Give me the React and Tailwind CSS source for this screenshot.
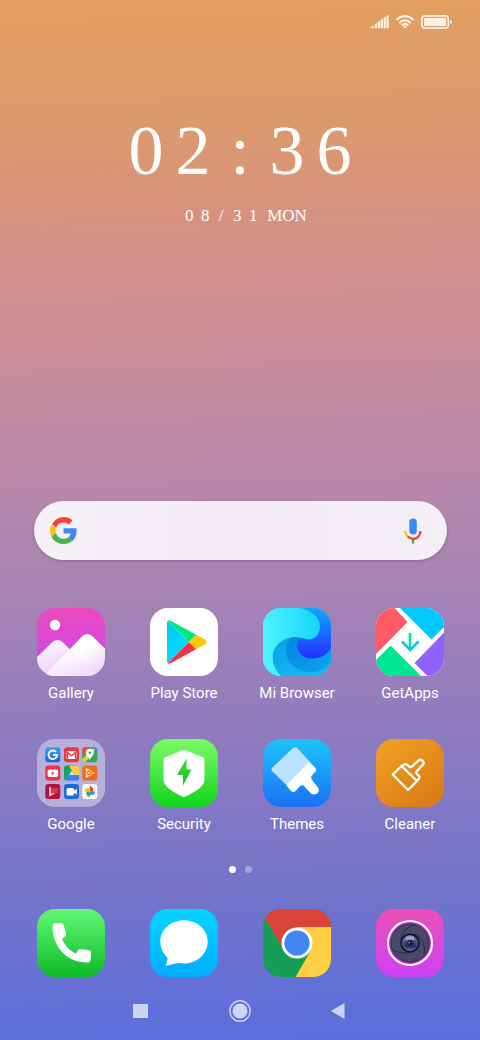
import React from "react";

const art = "block size-[68px] rounded-[18px] overflow-hidden";

function Art({ children }) {
  return (
    <svg viewBox="0 0 68 68" className={art} aria-hidden="true">
      {children}
    </svg>
  );
}

function Grad({ id, from, to, x2 = 0, y2 = 1 }) {
  return (
    <linearGradient id={id} x1="0" y1="0" x2={x2} y2={y2}>
      <stop offset="0" stopColor={from} />
      <stop offset="1" stopColor={to} />
    </linearGradient>
  );
}

function GalleryIcon() {
  return (
    <Art>
      <defs>
        <Grad id="gal" from="#ec4abc" to="#c346fa" />
        <Grad id="galA" from="#ffffff" to="#ecc8f6" x2="0.5" />
        <Grad id="galB" from="#ffffff" to="#f3dcfa" x2="0.6" />
        <linearGradient id="galC" x1="0" y1="0.2" x2="0.7" y2="1">
          <stop offset="0" stopColor="#fff" />
          <stop offset="0.55" stopColor="#fff" />
          <stop offset="1" stopColor="#f0d6f8" />
        </linearGradient>
      </defs>
      <rect width="68" height="68" fill="url(#gal)" />
      <circle cx="18" cy="17" r="5.2" fill="#fff" />
      <path d="M0 49 L15.500 34 Q20.500 30 25.500 34 L50 58 V68 H0Z" fill="url(#galA)" />
      <path d="M8 67 L45 28.500 Q50 24 55 28 L68 40.500 V68 H8Z" fill="url(#galC)" />
      <path d="M33 41 L8 67 V68 H62Z" fill="url(#galB)" opacity=".65" />
    </Art>
  );
}

function PlayIcon() {
  return (
    <Art>
      <defs>
        <Grad id="plB" from="#00c3f2" to="#00e1ff" x2="0.6" />
        <clipPath id="plC">
          <path d="M17 14.500 Q17 11.500 20.500 12.700 L55 31.500 Q58.500 34 55 36.300 L20.500 55.300 Q17 56.500 17 53.500Z" />
        </clipPath>
      </defs>
      <rect width="68" height="68" fill="#fff" />
      <g clipPath="url(#plC)">
        <path d="M10 5 L39 34 L10 63Z" fill="url(#plB)" />
        <path d="M10 5 L39 34 L48 25Z" fill="#00e87b" />
        <path d="M10 63 L39 34 L48 43Z" fill="#f5314a" />
        <path d="M39 34 L48 25 L68 34 L48 43Z" fill="#ffc800" />
      </g>
    </Art>
  );
}

function BrowserIcon() {
  return (
    <Art>
      <defs>
        <linearGradient id="mbA" gradientUnits="userSpaceOnUse" x1="0" y1="20" x2="60" y2="14">
          <stop offset="0" stopColor="#4ef3fe" />
          <stop offset="1" stopColor="#12d5fa" />
        </linearGradient>
        <Grad id="mbB" from="#0fa8ff" to="#2330fc" />
        <Grad id="mbC" from="#0a9fe6" to="#10baf8" x2="0.7" />
        <Grad id="mbD" from="#0781dc" to="#09a6f0" x2="0.9" />
      </defs>
      <rect width="68" height="68" fill="url(#mbA)" />
      <path d="M30 28 C14 29 8 40 9.500 50 C10 58 13 63 18 68 H68 V30Z" fill="url(#mbC)" />
      <path d="M31 28 C25 32 23 38 23 44 C24 57 36 64 48 64 C58 64 65 60 68 54 V30Z" fill="url(#mbD)" />
      <path d="M35 0 H68 V40 C64 47 57 50.500 49 50.500 C40 50.500 34 44 34 38 C34 34.500 36 31.500 39 29Z" fill="url(#mbB)" />
      <path d="M0 0 H37 C50 3 57 10 57 18 C57 27 51 32 45 31.500 C39 31 36 28.500 29 29.200 C16 31 9 41 9.500 50 C10 58 13 63 18 68 H0Z" fill="url(#mbA)" />
    </Art>
  );
}

function GetAppsIcon() {
  return (
    <Art>
      <rect width="68" height="68" fill="#fff" />
      <path d="M0 0 H18.500 L31.500 14 L0 46Z" fill="#ff5a67" />
      <path d="M24 0 H68 V19 L55.500 31.500Z" fill="#00c9ff" />
      <path d="M68 24.500 V68 H51.500 L38.500 55Z" fill="#8f62ff" />
      <path d="M0 52 L14.500 37.500 L45 68 H0Z" fill="#02e694" />
      <path d="M34 25 V42" stroke="#06df94" strokeWidth="2.600" />
      <path d="M26 33.500 L34.200 42 L42.500 33.500" fill="none" stroke="#16bdea" strokeWidth="2.600" />
    </Art>
  );
}

function Tile({ x, y, fill, children }) {
  return (
    <g transform={`translate(${x} ${y})`}>
      <rect width="15" height="15" rx="3" fill={fill} />
      {children}
    </g>
  );
}

function GoogleFolderIcon() {
  return (
    <Art>
      <defs>
        <Grad id="fgB" from="#2fa2f6" to="#1565dc" />
        <clipPath id="fgT">
          <rect width="15" height="15" rx="3" />
        </clipPath>
      </defs>
      <rect width="68" height="68" fill="#b7b0da" />
      <Tile x="8.300" y="8.200" fill="url(#fgB)">
        <path d="M10.800 4.800 A4.300 4.300 0 1 0 11.800 7.700 H7.700" fill="none" stroke="#fff" strokeWidth="1.900" />
      </Tile>
      <Tile x="27" y="8.200" fill="#ed3446">
        <rect x="2.500" y="3.800" width="10" height="8" rx=".8" fill="#fff" />
        <path d="M3.500 11.600 V5 L7.500 8.600 L11.500 5 V11.600" fill="none" stroke="#e63a47" strokeWidth="1.400" />
      </Tile>
      <Tile x="45.300" y="8.200" fill="#38ab58">
        <g clipPath="url(#fgT)">
          <path d="M0 0 H8 L0 9Z" fill="#e94b3d" />
          <path d="M0 12 L12 0 H15 L3 15 H0Z" fill="#f7cb38" />
          <path d="M10 0 H15 V5Z" fill="#3f86ed" />
          <path d="M7 12 L15 5 V15 H9Z" fill="#35a65a" />
        </g>
        <path d="M7.500 13 C7 10 3.500 8.500 3.500 5.500 A4 4 0 0 1 11.500 5.500 C11.500 8.500 8 10 7.500 13Z" fill="#fff" />
        <circle cx="7.500" cy="5.500" r="1.300" fill="#59965e" />
      </Tile>
      <Tile x="8.300" y="26.500" fill="#f0334b">
        <rect x="2.300" y="4" width="10.500" height="7.600" rx="2" fill="#fff" />
        <path d="M6.400 6 L9.200 7.700 L6.400 9.400Z" fill="#e82f42" />
      </Tile>
      <Tile x="27" y="26.500" fill="#3b82ec">
        <g clipPath="url(#fgT)">
          <path d="M0 0 H5.500 V6 L1.500 14 L0 15Z" fill="#19a261" />
          <path d="M5 0 L9 6 L4.500 12 L0 15 V8Z" fill="#1da364" />
          <path d="M5 0 H15 V9.500 H10.500Z" fill="#ffd04b" />
          <path d="M0 15 L4.500 9.500 H15 V15Z" fill="#3b82ec" />
          <path d="M7.700 5 L10.500 9.500 H5Z" fill="#c9e6ff" />
        </g>
      </Tile>
      <Tile x="45.300" y="26.500" fill="#f36b18">
        <path d="M3.500 2.500 L12.500 7.500 L3.500 12.500Z" fill="#fff0df" />
        <circle cx="7" cy="7.500" r="2.800" fill="#f36b18" stroke="#ffca4d" />
        <circle cx="7" cy="7.500" r="1" fill="#fff" />
      </Tile>
      <Tile x="8.300" y="45" fill="#ad1643">
        <path d="M4 2.500 L5.500 3.500 V10 L12.500 7.500 L4 12.500Z" fill="#ffe3e9" />
        <path d="M5.700 4 H12.500 V9 H5.700Z" fill="#e92d49" />
      </Tile>
      <Tile x="27" y="45" fill="#176be2">
        <rect x="2.500" y="4" width="7.500" height="7.500" rx="1.500" fill="#fff" />
        <path d="M9.500 7 L12.800 4.700 V10.800 L9.500 8.500Z" fill="#fff" />
      </Tile>
      <Tile x="45.300" y="45" fill="#fff">
        <path d="M7.500 7.500 V2 Q11.500 2.500 11 7.500Z" fill="#e94336" />
        <path d="M7.500 7.500 H13 Q12.500 11.500 7.500 11Z" fill="#4285f4" />
        <path d="M7.500 7.500 V13 Q3.500 12.500 4 7.500Z" fill="#34a853" />
        <path d="M7.500 7.500 H2 Q2.500 3.500 7.500 4Z" fill="#fbbc04" />
      </Tile>
    </Art>
  );
}

function SecurityIcon() {
  return (
    <Art>
      <defs>
        <Grad id="sec" from="#7dfa68" to="#12d51f" />
        <Grad id="secB" from="#3ddc35" to="#0cc51a" />
      </defs>
      <rect width="68" height="68" fill="url(#sec)" />
      <path d="M32.500 11.300 Q34 10.500 35.500 11.300 L52.500 18 Q54.500 19 54.500 21 V40 C54.500 49 42 54 35.500 57.600 Q34 58.400 32.500 57.600 C26 54 13.500 49 13.500 40 V21 Q13.500 19 15.500 18Z" fill="#fff" />
      <path d="M36.500 19.500 L27 36 H33 V46.500 L41.500 30.500 H36.500Z" fill="url(#secB)" />
    </Art>
  );
}

function ThemesIcon() {
  return (
    <Art>
      <defs>
        <Grad id="thm" from="#1dc5fb" to="#1b70f5" />
      </defs>
      <rect width="68" height="68" fill="url(#thm)" />
      <path d="M46 22.500 L52 28.500 Q54 31 52 33 L48.500 37 Q47.500 39 49 41 L55 48.500 C58 53 52 58 47.500 54 L41 47 Q39 45.500 37 47 L32.500 52 Q30.500 54 28 52 L23 46Z" fill="#fff" />
      <path d="M29.500 9.500 Q32 7 34.500 9.500 L46.700 22.500 L23.500 46 L9.500 32.500 Q7.500 30.500 9.500 28.500Z" fill="#bbe3fd" />
    </Art>
  );
}

function CleanerIcon() {
  return (
    <Art>
      <defs>
        <Grad id="cln" from="#f1a321" to="#d97a18" x2="0.8" />
      </defs>
      <rect width="68" height="68" fill="url(#cln)" />
      <path d="M26 26.500 L16.700 35.500 L32 51 L41.500 41.500 L43 39.500 Q44 38 42.500 36.500 L41 35 Q39.500 33.500 41 32 L47 25.500 Q48.500 23.500 46.500 21.700 Q44.500 20 42.500 21.500 L36 27.500 Q34.500 29 33 27.500 L31.500 26 Q29.500 24.500 28 25.500Z M25.500 27 L41 42" fill="none" stroke="#fff" strokeWidth="2.300" strokeLinejoin="round" />
    </Art>
  );
}

function PhoneIcon() {
  return (
    <Art>
      <defs>
        <Grad id="phn" from="#63f877" to="#0cba26" />
      </defs>
      <rect width="68" height="68" fill="url(#phn)" />
      <path d="M18 14.200 H24 Q26.300 14.200 26.800 16.500 L29 24 Q29.500 26 28 27.500 L25 30 C28 37 32.500 41.500 39 44.500 L41 41.300 Q42 39.800 44 40.200 L52 41 Q54.300 41.500 54.200 44 L53.500 51 Q53.300 53.500 51 53.500 C30 54 15.500 38 15.500 17 Q15.500 14.200 18 14.200Z" fill="#fff" />
    </Art>
  );
}

function MessagesIcon() {
  return (
    <Art>
      <defs>
        <Grad id="msg" from="#05d5ff" to="#02acff" />
      </defs>
      <rect width="68" height="68" fill="url(#msg)" />
      <path d="M34 11.300 C20.500 11.300 10.300 20.800 10.300 32.500 C10.300 39 13 44.500 17.500 48.500 C17.500 52 16.500 54 15.800 55.800 Q15.500 57 17 56.800 C21 56 24.500 54.500 28 53.800 Q31 54.500 34 54.500 C47.500 54.500 57.700 44.500 57.700 32.500 C57.700 20.500 47 11.300 34 11.300Z" fill="#fff" />
    </Art>
  );
}

function ChromeIcon() {
  return (
    <Art>
      <rect width="68" height="68" fill="#149e58" />
      <path d="M34 18 H68 V68 H32.500 L48 41Z" fill="#ffce43" />
      <path d="M0 0 H68 V18 H34 L19.500 39 L1 7.500Z" fill="#dc4437" />
      <circle cx="34" cy="34" r="15.500" fill="#fff" />
      <circle cx="34" cy="34" r="12.600" fill="#4286f5" />
    </Art>
  );
}

function CameraIcon() {
  return (
    <Art>
      <defs>
        <Grad id="cam" from="#ec4fb6" to="#cd42f5" />
        <linearGradient id="lens" x1="0" y1="0" x2="0" y2="1">
          <stop offset="0" stopColor="#8d94b4" />
          <stop offset=".4" stopColor="#4a5480" />
          <stop offset=".7" stopColor="#29325f" />
          <stop offset="1" stopColor="#5265b0" />
        </linearGradient>
      </defs>
      <rect width="68" height="68" fill="url(#cam)" />
      <circle cx="34" cy="34" r="22" fill="#b927bb" stroke="#fff" strokeWidth="2.200" />
      <circle cx="34" cy="34" r="19" fill="#464a68" stroke="#2b2c48" strokeWidth=".8" />
      <g fill="none" stroke="#25273f" strokeWidth=".9">
        <path d="M25 30 C26 23 32 17 39 15.800" />
        <path d="M38 25 C45 27 50 35 48 45" />
        <path d="M38 42 C32 45 23 44 15.500 41" />
      </g>
      <circle cx="34" cy="34" r="9.800" fill="#14162a" />
      <circle cx="34" cy="34" r="7.500" fill="url(#lens)" stroke="#6674ab" strokeWidth=".7" />
      <ellipse cx="34" cy="29.800" rx="4.500" ry="2.200" fill="#c9cee0" opacity=".5" />
      <circle cx="34" cy="34.500" r="3.800" fill="#222b5c" />
      <circle cx="34" cy="34.500" r="1.600" fill="#0b0d25" />
      <circle cx="33.300" cy="33.800" r=".8" fill="#a9b6f2" />
    </Art>
  );
}

function AppButton({ label, Icon, hideLabel }) {
  return (
    <button type="button" aria-label={label} className="flex flex-col items-center">
      <Icon />
      {!hideLabel && (
        <span className="mt-[7px] whitespace-nowrap text-[15px] leading-5 text-white">{label}</span>
      )}
    </button>
  );
}

const apps = [
  ["Gallery", GalleryIcon],
  ["Play Store", PlayIcon],
  ["Mi Browser", BrowserIcon],
  ["GetApps", GetAppsIcon],
  ["Google", GoogleFolderIcon],
  ["Security", SecurityIcon],
  ["Themes", ThemesIcon],
  ["Cleaner", CleanerIcon],
];

const dock = [
  ["Phone", PhoneIcon],
  ["Messages", MessagesIcon],
  ["Chrome", ChromeIcon],
  ["Camera", CameraIcon],
];

function StatusBar() {
  return (
    <header className="flex h-11 items-center justify-end gap-[7px] pr-7 text-[#fff3e6]">
      <svg viewBox="0 0 19 14" className="h-[14px] w-[19px]" fill="currentColor" aria-hidden="true">
        <path d="M0 13.200 L3.700 10.200 V13.200Z M4.800 9.300 L7 7.800 V13.200 H4.800Z M7.800 7.200 L10 5.600 V13.200 H7.800Z M10.800 4.900 L13 3.400 V13.200 H10.800Z M13.700 2.900 L15.800 1.500 V13.200 H13.700Z M16.500 1 L18.600 0 V13.200 H16.500Z" />
      </svg>
      <svg viewBox="0 0 18 14" className="h-[14px] w-[18px]" fill="none" stroke="currentColor" strokeWidth="2.100" aria-hidden="true">
        <path d="M.7 4.900 Q9 -2.600 17.300 4.900" />
        <path d="M3.300 7.900 Q9 2.600 14.700 7.900" />
        <path d="M5.700 10.500 Q9 7.400 12.300 10.500" />
        <path d="M7.100 11.400 Q9 10.200 10.900 11.400 L9 13.800Z" fill="currentColor" stroke="none" />
      </svg>
      <svg viewBox="0 0 31 14" className="h-[14px] w-[31px]" aria-hidden="true">
        <rect x=".9" y=".9" width="26.400" height="12.200" rx="3" fill="none" stroke="currentColor" strokeWidth="1.600" />
        <rect x="3.100" y="3.100" width="22" height="7.800" rx="1" fill="currentColor" />
        <path d="M29 5 Q30.800 5 30.800 7 Q30.800 9 29 9Z" fill="currentColor" />
      </svg>
    </header>
  );
}

function Clock() {
  return (
    <section className="mt-[72px] flex flex-col items-center font-['Liberation_Serif',serif] text-white">
      <time className="grid grid-cols-[repeat(5,47px)] text-center text-[70px] leading-[70px]">
        <span>0</span>
        <span>2</span>
        <span>:</span>
        <span>3</span>
        <span>6</span>
      </time>
      <p className="mt-5 flex pl-2 text-center text-[17px] leading-5">
        <span className="w-4">0</span>
        <span className="w-4">8</span>
        <span className="w-4">/</span>
        <span className="w-4">3</span>
        <span className="w-4">1</span>
        <span className="ml-1.5">MON</span>
      </p>
    </section>
  );
}

function SearchBar() {
  return (
    <form className="ml-[34px] mr-[33px] flex h-[59px] items-center rounded-full bg-gradient-to-r from-[#f6f2f7] via-[#f1eaf1] to-[#f5f0f6] px-4 shadow-[0_1px_3px_rgba(70,40,90,0.35)]">
      <svg viewBox="0 0 48 48" className="size-[27px] shrink-0" aria-hidden="true">
        <path fill="#ff3d31" d="M4 13 C8 5 15.500 0 24 0 C30.500 0 36 2.400 40 6.300 L33.200 13.200 C30.700 10.800 27.600 9.400 24 9.400 C18 9.400 13 13.300 10.800 18.500Z" />
        <path fill="#ffc107" d="M2.700 13.200 L10.700 19.200 C9.400 22.400 9.400 26 10.700 29.200 L2.700 35 C-.8 28 -.8 20 2.700 13.200Z" />
        <path fill="#4caf50" d="M2.700 35 L10.700 28.800 C12.700 34.600 17.900 38.600 24 38.600 C27 38.600 30 37.800 32.200 36.300 L39.800 42.200 C35.700 46 30.100 48 24 48 C14.900 48 6.700 42.900 2.700 35Z" />
        <path fill="#4285f4" d="M24 19.800 H46.900 C48.500 29 45.700 37.200 39.800 42.500 L32.100 36.400 C34.600 34.700 36.300 32.200 36.900 29.200 H24Z" />
      </svg>
      <input type="search" aria-label="Search" className="min-w-0 flex-1 bg-transparent px-3 text-[16px] text-gray-800 outline-none" />
      <button type="button" aria-label="Voice search" className="flex w-9 shrink-0 justify-center">
        <svg viewBox="0 0 18 26" className="h-[26px] w-[18px]" aria-hidden="true">
          <rect x="5.300" y=".5" width="7.500" height="16" rx="3.700" fill="#4285f4" />
          <path d="M9 21 V25.500" stroke="#34a853" strokeWidth="2.200" />
          <path d="M1.500 13 C1.500 15.300 2.400 17.300 3.700 18.700" fill="none" stroke="#fbbc04" strokeWidth="2.200" />
          <path d="M3.700 18.500 C7 21.800 12 21.500 14.300 18.700 C15.800 17 16.500 15.300 16.500 13" fill="none" stroke="#ea4335" strokeWidth="2.200" />
        </svg>
      </button>
    </form>
  );
}

const iconGrid = "grid grid-cols-[repeat(4,68px)] justify-between gap-y-9 pl-[37px] pr-9";

export default function App() {
  return (
    <main className="flex min-h-screen flex-col bg-[linear-gradient(178deg,#e3a05f_0%,#dc986f_14%,#d38f89_25%,#c98c99_34%,#b687ad_48%,#a381b7_59%,#8c7bc1_72%,#7674c9_84%,#596edc_100%)] font-['Roboto',sans-serif]">
      <StatusBar />
      <Clock />
      <div className="flex-1" />
      <SearchBar />
      <div className={`mt-12 ${iconGrid}`}>
        {apps.map(([label, Icon]) => (
          <AppButton key={label} label={label} Icon={Icon} />
        ))}
      </div>
      <div className="mt-8 flex justify-center gap-[9px]">
        <span className="size-[7px] rounded-full bg-white" />
        <span className="size-[7px] rounded-full bg-white/35" />
      </div>
      <div className={`mt-9 ${iconGrid}`}>
        {dock.map(([label, Icon]) => (
          <AppButton key={label} label={label} Icon={Icon} hideLabel />
        ))}
      </div>
      <nav className="flex justify-center gap-[75px] pb-[17px] pt-[22px] text-[#d0d4f3]">
        <button type="button" aria-label="Recent apps">
          <svg viewBox="0 0 24 24" className="block size-6" aria-hidden="true">
            <path d="M4 5 H19 V19 H4Z" fill="currentColor" />
          </svg>
        </button>
        <button type="button" aria-label="Home">
          <svg viewBox="0 0 24 24" className="block size-6" aria-hidden="true">
            <circle cx="12" cy="12" r="10.200" fill="none" stroke="currentColor" strokeWidth="1.400" />
            <circle cx="12" cy="12" r="7.500" fill="currentColor" />
          </svg>
        </button>
        <button type="button" aria-label="Back">
          <svg viewBox="0 0 24 24" className="block size-6" aria-hidden="true">
            <path d="M4 12 L17.500 4 V20Z" fill="currentColor" />
          </svg>
        </button>
      </nav>
    </main>
  );
}
